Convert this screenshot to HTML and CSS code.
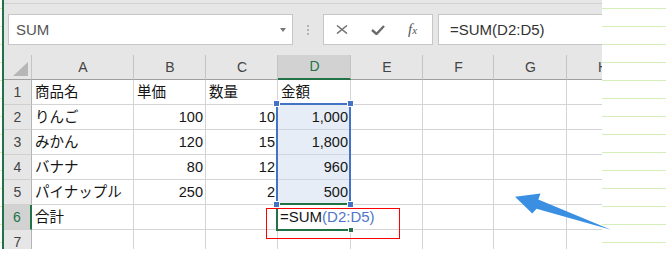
FILE: index.html
```html
<!DOCTYPE html>
<html lang="ja">
<head>
    <meta charset="UTF-8">
    <meta name="viewport" content="width=device-width, initial-scale=1.0">
    <title>SUM関数</title>
    <link rel="stylesheet" href="styles.css">
</head>
<body>
    <div class="excel">
        <div class="formula-bar">
            <div class="name-box">
                <span>SUM</span>
                <span class="caret"></span>
            </div>
            <div class="grip"><i></i><i></i><i></i></div>
            <div class="fx-buttons">
                <svg width="12" height="9" viewBox="0 0 12 9"><path d="M1 0.5 L11 8.5 M11 0.5 L1 8.5" stroke="#707070" stroke-width="1.5" fill="none"/></svg>
                <svg width="14" height="10" viewBox="0 0 14 10"><path d="M1 5 L5.5 9 L13 1" stroke="#6b6b6b" stroke-width="2.4" fill="none"/></svg>
                <span class="fx">f<small>x</small></span>
            </div>
            <div class="formula-input">=SUM(D2:D5)</div>
        </div>
        <div class="sheet">
            <div class="grid">
                <div class="col-head corner"></div>
                <div class="col-head">A</div>
                <div class="col-head">B</div>
                <div class="col-head">C</div>
                <div class="col-head current">D</div>
                <div class="col-head">E</div>
                <div class="col-head">F</div>
                <div class="col-head">G</div>
                <div class="col-head">H</div>

                <div class="row-head">1</div>
                <div>商品名</div>
                <div>単価</div>
                <div>数量</div>
                <div>金額</div>
                <div></div><div></div><div></div><div></div>

                <div class="row-head">2</div>
                <div>りんご</div>
                <div class="num">100</div>
                <div class="num">10</div>
                <div class="num in-range">1,000</div>
                <div></div><div></div><div></div><div></div>

                <div class="row-head">3</div>
                <div>みかん</div>
                <div class="num">120</div>
                <div class="num">15</div>
                <div class="num in-range">1,800</div>
                <div></div><div></div><div></div><div></div>

                <div class="row-head">4</div>
                <div>バナナ</div>
                <div class="num">80</div>
                <div class="num">12</div>
                <div class="num in-range">960</div>
                <div></div><div></div><div></div><div></div>

                <div class="row-head">5</div>
                <div>パイナップル</div>
                <div class="num">250</div>
                <div class="num">2</div>
                <div class="num in-range">500</div>
                <div></div><div></div><div></div><div></div>

                <div class="row-head current">6</div>
                <div>合計</div>
                <div></div>
                <div></div>
                <div class="editing">=SUM<span class="ref">(D2:D5)</span></div>
                <div></div><div></div><div></div><div></div>

                <div class="row-head">7</div>
                <div></div><div></div><div></div><div></div>
                <div></div><div></div><div></div><div></div>
            </div>
            <div class="ref-range">
                <i class="handle tl"></i><i class="handle tr"></i>
                <i class="handle bl"></i><i class="handle br"></i>
            </div>
            <div class="active-cell"><i class="fill-handle"></i></div>
            <div class="callout"></div>
        </div>
    </div>
    <svg class="arrow" width="666" height="258" viewBox="0 0 666 258">
        <polygon points="515,196.7 540.5,193.5 538.3,199.5 611,229.8 536.5,208.8 532.3,213.5" fill="#3a8fe3"/>
    </svg>
</body>
</html>
```

FILE: styles.css
```css
html {
    height: 100%;
    background: #fff repeating-linear-gradient(to bottom, transparent 0 8px, #d6efba 8px 9px, transparent 9px 18px);
}
body {
    margin: 0;
    font-family: "Liberation Sans", "Noto Sans CJK JP", sans-serif;
}
.excel {
    width: 600px;
    height: 249px;
    margin-left: 2px;
    border-left: 2px solid #217346;
    box-sizing: border-box;
    background-color: #e6e6e6;
    overflow: hidden;
}
.formula-bar {
    display: flex;
    align-items: flex-start;
    height: 52px;
    margin-top: 3px;
    border-top: 1px solid #d2d2d2;
    padding: 10px 0 0 4px;
    box-sizing: border-box;
}
.name-box {
    width: 285px;
    height: 31px;
    box-sizing: border-box;
    border: 1px solid #c6c6c6;
    background-color: #fff;
    display: flex;
    align-items: center;
    justify-content: space-between;
    padding: 0 6px 0 7px;
    font-size: 15px;
    color: #555;
}
.caret {
    width: 0;
    height: 0;
    border-left: 3.5px solid transparent;
    border-right: 3.5px solid transparent;
    border-top: 4px solid #777;
}
.grip {
    width: 2px;
    margin: 11px 14px 0 14px;
    display: flex;
    flex-direction: column;
    gap: 2px;
}
.grip i {
    width: 2px;
    height: 2px;
    background-color: #b3b3b3;
}
.fx-buttons {
    width: 110px;
    height: 31px;
    box-sizing: border-box;
    border: 1px solid #c6c6c6;
    background-color: #fff;
    display: flex;
    align-items: center;
    padding-left: 12px;
    gap: 23px;
    margin-right: 5px;
}
.fx {
    font-family: "Liberation Serif", serif;
    font-style: italic;
    font-size: 15px;
    color: #555;
}
.fx small {
    font-size: 11px;
}
.formula-input {
    flex: 1;
    height: 31px;
    box-sizing: border-box;
    border: 1px solid #c6c6c6;
    border-right: none;
    background-color: #fff;
    padding-left: 11px;
    font-size: 15px;
    line-height: 29px;
    color: #333;
}
.sheet {
    position: relative;
}
.grid {
    display: grid;
    grid-template-columns: 28px 102px 72px 72px 73px 72px 71px 73px 72px;
    grid-template-rows: repeat(8, 25px);
    width: max-content;
    background-color: #fff;
}
.grid > div {
    box-sizing: border-box;
    border-right: 1px solid #d4d4d4;
    border-bottom: 1px solid #d4d4d4;
    padding: 0 2px 0 3px;
    line-height: 24px;
    white-space: nowrap;
    font-size: 14.5px;
    color: #151515;
}
.grid .col-head {
    background-color: #e6e6e6;
    text-align: center;
    color: #444;
    font-size: 14px;
    border-right-color: #c4c4c4;
    border-bottom-color: #9f9f9f;
}
.grid .row-head {
    background-color: #e6e6e6;
    text-align: center;
    color: #444;
    font-size: 14px;
    padding: 0;
    border-right-color: #b4b4b4;
    border-bottom-color: #d0d0d0;
}
.grid .col-head.current {
    background-color: #d2d2d2;
    color: #217346;
    border-bottom: 2px solid #217346;
    line-height: 23px;
}
.grid .row-head.current {
    background-color: #d2d2d2;
    color: #217346;
    border-right: 2px solid #217346;
}
.corner {
    position: relative;
}
.corner::after {
    content: "";
    position: absolute;
    right: 3px;
    bottom: 3px;
    width: 15px;
    height: 14px;
    background-color: #b6b6b6;
    clip-path: polygon(100% 0, 100% 100%, 0 100%);
}
.grid .num {
    text-align: right;
}
.grid .in-range {
    background-color: #e7edf7;
    border-bottom-color: #cfd6e2;
}
.grid .editing {
    border-right-color: transparent;
    padding-left: 2px;
    font-size: 15px;
}
.editing .ref {
    color: #4f76c8;
}
.ref-range {
    position: absolute;
    left: 272px;
    top: 48px;
    width: 75px;
    height: 102px;
    border: 2px solid #4472c4;
    box-sizing: border-box;
}
.handle {
    position: absolute;
    width: 7px;
    height: 7px;
    background-color: #4472c4;
    border: 1px solid #fff;
    box-sizing: border-box;
    z-index: 2;
}
.handle.tl { left: -5px; top: -5px; }
.handle.tr { right: -5px; top: -5px; }
.handle.bl { left: -5px; bottom: -5px; }
.handle.br { right: -5px; bottom: -5px; }
.active-cell {
    position: absolute;
    left: 272px;
    top: 148px;
    width: 74px;
    height: 28px;
    border: 2px solid #217346;
    border-right: none;
    box-sizing: border-box;
}
.fill-handle {
    position: absolute;
    right: -4px;
    bottom: -4px;
    width: 6px;
    height: 6px;
    background-color: #217346;
    border: 1px solid #fff;
    box-sizing: border-box;
}
.callout {
    position: absolute;
    left: 262px;
    top: 153px;
    width: 134px;
    height: 31px;
    border: 1px solid #f00;
    box-sizing: border-box;
}
.arrow {
    position: absolute;
    left: 0;
    top: 0;
    pointer-events: none;
}
```
